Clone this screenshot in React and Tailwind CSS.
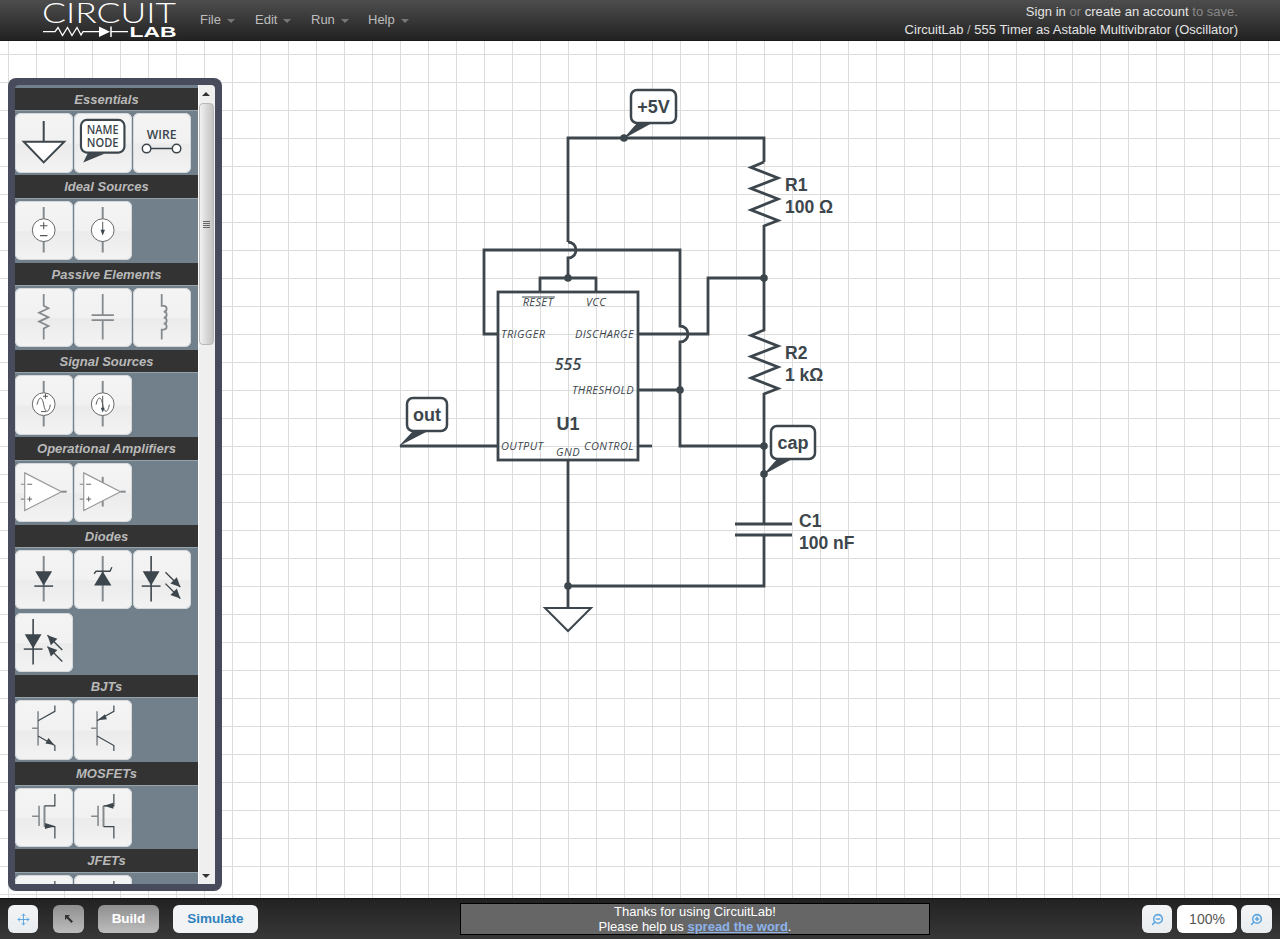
import React from 'react';
import { Move, ZoomIn, ZoomOut } from 'lucide-react';

const INK = '#3c464c';
const GREY = '#858a8e';

// tile glyphs, all in a 58x60 box
const Stem = ({ x = 28.7, y1 = 6, y2 = 52, c = GREY, w = 2 }) => (
  <line x1={x} y1={y1} x2={x} y2={y2} stroke={c} strokeWidth={w} />
);

const Ring = () => <circle cx="28.7" cy="29.5" r="11.5" fill="#fff" stroke="#666" strokeWidth="1" />;

const Sine = () => <path d="M22 30c2-9 5-9 6.700 0s5 9 6.700 0" fill="none" stroke="#555" strokeWidth="1" />;

const OpAmp = ({ rail }) => (
  <g>
    {rail && <line x1="28.7" y1="14" x2="28.7" y2="44" stroke={GREY} strokeWidth="2" />}
    <path d="M9.500 10 46.700 29 9.500 48Z" fill="#fff" stroke="#999" strokeWidth="1.200" />
    <path d="M46.700 29H52" stroke={GREY} strokeWidth="2" />
    <path d="M5.500 21.500H9.500M5.500 36.500H9.500" stroke={GREY} strokeWidth="1.200" />
    <path d="M12 21.500H17M12 36.500H17M14.500 34V39" stroke="#666" strokeWidth="1" />
  </g>
);

const DiodeMark = ({ x = 28.7 }) => (
  <g>
    <path d={`M${x - 8.500} 21.500H${x + 8.500}L${x} 36Z`} fill={INK} />
    <line x1={x - 9.500} y1="36.500" x2={x + 9.500} y2="36.500" stroke={INK} strokeWidth="1.500" />
  </g>
);

const Arrows = ({ inward }) => {
  const one = (y) =>
    inward ? (
      <g key={y}>
        <line x1="32.500" y1={y} x2="47.500" y2={y + 15} stroke={INK} strokeWidth="1.400" />
        <path d={`M32.500 ${y}l10 3.500-6.500 6.500Z`} fill={INK} />
      </g>
    ) : (
      <g key={y}>
        <line x1="32.500" y1={y} x2="47.500" y2={y + 15} stroke={INK} strokeWidth="1.400" />
        <path d={`M47.500 ${y + 15}l-10-3.500 6.500-6.500Z`} fill={INK} />
      </g>
    );
  return <g>{[22.5, 34].map(one)}</g>;
};

const ICONS = {
  ground: (
    <g stroke={INK} fill="none" strokeWidth="2">
      <path d="M28.700 8V29" />
      <path d="M8.500 29H49.500L28.700 50Z" fill="#fff" />
    </g>
  ),
  name: (
    <g>
      <path d="M14 40 9 50 31 41Z" fill={INK} />
      <rect x="6.700" y="7" width="44" height="33" rx="6" fill="#fff" stroke={INK} strokeWidth="2.200" />
      <text x="28.700" y="21.500" textAnchor="middle" fontFamily="Open Sans, sans-serif" fontWeight="600" fontSize="13.500" textLength="32" lengthAdjust="spacingAndGlyphs" fill={INK}>NAME</text>
      <text x="28.700" y="34.300" textAnchor="middle" fontFamily="Open Sans, sans-serif" fontWeight="600" fontSize="13.500" textLength="32" lengthAdjust="spacingAndGlyphs" fill={INK}>NODE</text>
    </g>
  ),
  wire: (
    <g>
      <text x="28.700" y="26.500" textAnchor="middle" fontFamily="Open Sans, sans-serif" fontWeight="600" fontSize="13.500" textLength="30" lengthAdjust="spacingAndGlyphs" fill={INK}>WIRE</text>
      <path d="M17.500 36H39.500" stroke={INK} strokeWidth="1.500" />
      <circle cx="13.400" cy="36" r="4.300" fill="#fff" stroke={INK} strokeWidth="1.500" />
      <circle cx="43.700" cy="36" r="4.300" fill="#fff" stroke={INK} strokeWidth="1.500" />
    </g>
  ),
  voltage: (
    <g>
      <Stem />
      <Ring />
      <path d="M25 25H32.500M28.700 21.500V28.500M25 35H32.500" stroke="#555" strokeWidth="1.100" />
    </g>
  ),
  current: (
    <g>
      <Stem />
      <Ring />
      <path d="M28.700 21V32" stroke="#555" strokeWidth="1" />
      <path d="M26.500 29H31L28.700 35Z" fill={INK} />
    </g>
  ),
  resistor: (
    <path d="M28.700 6V18L33.500 20.500 24 25 33.500 29.500 24 34 33.500 38.500 28.700 41V52" fill="none" stroke={GREY} strokeWidth="1.800" />
  ),
  capacitor: (
    <g stroke={GREY} strokeWidth="1.800">
      <path d="M28.700 6V27.500M28.700 32.500V52" />
      <path d="M17.500 27.500H40M17.500 32.500H40" />
    </g>
  ),
  inductor: (
    <path d="M28.700 6V18h2c4 0 4 6 0 6 4 0 4 6 0 6 4 0 4 6 0 6 4 0 4 6 0 6h-2V52" fill="none" stroke={GREY} strokeWidth="1.800" />
  ),
  acVoltage: (
    <g>
      <Stem />
      <Ring />
      <Sine />
      <path d="M28 21.500H33M30.500 19V24M26 37H31" stroke="#555" strokeWidth="1" />
    </g>
  ),
  acCurrent: (
    <g>
      <Stem />
      <Ring />
      <Sine />
      <path d="M28.700 21V36" stroke="#555" strokeWidth="1" />
      <path d="M26.800 33H30.600L28.700 38Z" fill={INK} />
    </g>
  ),
  opamp: <OpAmp />,
  opampRail: <OpAmp rail />,
  diode: (
    <g>
      <Stem />
      <DiodeMark />
    </g>
  ),
  zener: (
    <g>
      <Stem />
      <path d="M20 36H37.500L28.700 21.500Z" fill={INK} />
      <path d="M20 24 22 21.500H36L38 17.500" fill="none" stroke={INK} strokeWidth="1.400" />
    </g>
  ),
  led: (
    <g>
      <Stem x={18} c={INK} w={1.600} />
      <DiodeMark x={18} />
      <Arrows />
    </g>
  ),
  photo: (
    <g>
      <Stem x={18} c={INK} w={1.600} />
      <DiodeMark x={18} />
      <Arrows inward />
    </g>
  ),
  npn: (
    <g fill="none">
      <path d="M17 28.500H23M23 11.500V46" stroke={GREY} strokeWidth="1.600" />
      <path d="M23 21 40 11.500V5.500M23 36.500 40 46V51.500" stroke={INK} strokeWidth="1.200" />
      <path d="M39.500 45.500 30.500 44 33.500 38.500Z" fill={INK} />
    </g>
  ),
  pnp: (
    <g fill="none">
      <path d="M17 28.500H23M23 11.500V46" stroke={GREY} strokeWidth="1.600" />
      <path d="M23 21 40 11.500V5.500M23 36.500 40 46V51.500" stroke={INK} strokeWidth="1.200" />
      <path d="M23.500 20.500 31 14.500 33 19.500Z" fill={INK} />
    </g>
  ),
  nmos: (
    <g fill="none">
      <path d="M17 28.500H23.500M24 18V38.500" stroke={GREY} strokeWidth="1.600" />
      <path d="M29.500 18V39" stroke={GREY} strokeWidth="2" />
      <path d="M29.500 18H40V6M29.500 39H40V51" stroke={INK} strokeWidth="1.200" />
      <path d="M30 35.500 40 38.500 30 41.500Z" fill={INK} />
    </g>
  ),
  pmos: (
    <g fill="none">
      <path d="M17 28.500H23.500M24 18V38.500" stroke={GREY} strokeWidth="1.600" />
      <path d="M29.500 18V39" stroke={GREY} strokeWidth="2" />
      <path d="M29.500 18H40V6M29.500 39H40V51" stroke={INK} strokeWidth="1.200" />
      <path d="M30 18 39.500 15V21Z" fill={INK} />
    </g>
  ),
};

const SECTIONS = [
  { title: 'Essentials', tiles: ['ground', 'name', 'wire'] },
  { title: 'Ideal Sources', tiles: ['voltage', 'current'] },
  { title: 'Passive Elements', tiles: ['resistor', 'capacitor', 'inductor'] },
  { title: 'Signal Sources', tiles: ['acVoltage', 'acCurrent'] },
  { title: 'Operational Amplifiers', tiles: ['opamp', 'opampRail'] },
  { title: 'Diodes', tiles: ['diode', 'zener', 'led', 'photo'] },
  { title: 'BJTs', tiles: ['npn', 'pnp'] },
  { title: 'MOSFETs', tiles: ['nmos', 'pmos'] },
  { title: 'JFETs', tiles: ['nmos', 'pmos'] },
];

const Tile = ({ name }) => (
  <div className="w-[58px] h-[59.33px] rounded-md shadow-[inset_0_0_0_1px_#d4d8da] bg-[linear-gradient(#f4f4f4_0%,#f1f1f1_50%,#ebebeb_52%,#f3f3f3_100%)]">
    <svg viewBox="0 0 58 60" className="block w-full h-full overflow-visible">
      {ICONS[name]}
    </svg>
  </div>
);

const Section = ({ title, tiles }) => (
  <div>
    <div className="h-[22.33px] bg-[#333333] text-center text-[13px] leading-[23px] italic font-bold text-[#b9b9b9]">
      {title}
    </div>
    <div className="bg-[#71808b] border-t border-[#97a3ab] pt-[2px] pb-[2.67px] flex flex-wrap gap-x-px gap-y-[3.67px]">
      {tiles.map((t) => (
        <Tile key={t} name={t} />
      ))}
    </div>
  </div>
);

const Palette = () => (
  <div className="absolute left-2 top-[37px] w-[214px] h-[813px] rounded-lg bg-[#474b5c] pl-[7px] pr-[7px] pt-[7px] pb-[7px]">
    <div className="flex h-full overflow-hidden rounded-t-sm">
      <div className="w-[183px] overflow-hidden">
        <div className="h-[3px] bg-[#71808b]"></div>
        {SECTIONS.map((s) => (
          <Section key={s.title} title={s.title} tiles={s.tiles} />
        ))}
      </div>
      <div className="w-[17px] relative bg-[#efefef] border-l border-white">
        <div className="absolute top-[7px] left-[3px] border-x-[4px] border-x-transparent border-b-[4px] border-b-[#333]"></div>
        <div className="absolute top-[18px] left-0 w-[15px] h-[242px] rounded-sm border border-[#b8b8b8] bg-[linear-gradient(90deg,#f2f2f2,#d6d6d6_55%,#c4c4c4)] flex flex-col items-center justify-center gap-px">
          <div className="w-[7px] h-px bg-[#666]"></div>
          <div className="w-[7px] h-px bg-[#666]"></div>
          <div className="w-[7px] h-px bg-[#666]"></div>
          <div className="w-[7px] h-px bg-[#666]"></div>
        </div>
        <div className="absolute bottom-[6px] left-[3px] border-x-[4px] border-x-transparent border-t-[4px] border-t-[#333]"></div>
      </div>
    </div>
  </div>
);

const Logo = () => (
  <svg width="136" height="40" viewBox="0 0 136 40" className="block shrink-0 overflow-visible">
    <text x="0" y="23" fontFamily="Lato, sans-serif" fontWeight="300" fontSize="27" fill="#fff" textLength="134" lengthAdjust="spacingAndGlyphs">CIRCUIT</text>
    <path d="M1 31.700H13L16 27.500 20.500 35.500 25.500 27.500 30 35.500 35 27.500 39 35 41 31.700H57M69 31.700H86" fill="none" stroke="#fff" strokeWidth="1.300" />
    <path d="M57 26.500V37L68 31.700Z" fill="#fff" />
    <path d="M69 26.500V37" stroke="#fff" strokeWidth="1.500" />
    <text x="87.500" y="37.300" fontFamily="Liberation Sans, sans-serif" fontWeight="700" fontSize="14.500" fill="#fff" textLength="47" lengthAdjust="spacingAndGlyphs">LAB</text>
  </svg>
);

const Menu = ({ label, className }) => (
  <div className={`flex items-center gap-[6px] text-[13px] text-[#bdbdbd] ${className}`}>
    {label}
    <span className="mt-[3px] border-x-[4px] border-x-transparent border-t-[4px] border-t-[#777]"></span>
  </div>
);

const Header = () => (
  <header className="h-[41px] shrink-0 flex bg-[linear-gradient(#4d4d4d,#222222)] border-b border-[#1a1a1a] pl-[42px] pr-[42px]">
    <Logo />
    <div className="flex ml-[22px] mt-[-1px]">
      <Menu label="File" className="w-[55px]" />
      <Menu label="Edit" className="w-[56px]" />
      <Menu label="Run" className="w-[57px]" />
      <Menu label="Help" />
    </div>
    <div className="ml-auto text-right text-[13px] tracking-[0.03px] leading-[17.500px] pt-[3px] text-[#e4e4e4]">
      <div>
        Sign in <span className="text-[#888]">or</span> create an account <span className="text-[#888]">to save.</span>
      </div>
      <div>CircuitLab <span className="text-[#aaa]">/</span> 555 Timer as Astable Multivibrator (Oscillator)</div>
    </div>
  </header>
);

const WIRES = [
  'M568 242V138H764V162',
  'M764 162L751 167.500 778 178 751 188.500 778 199 751 210 778 220.500 764 226V278',
  'M764 278V330L751 335.500 778 346 751 356.500 778 367 751 378 778 388.500 764 394V524',
  'M568 242a8 8 0 0 1 0 16V278',
  'M540 292V278H596V292',
  'M498 334H484V250H680V326a8 8 0 0 1 0 16V446H764',
  'M638 334H708V278H764',
  'M638 390H680',
  'M638 446H652',
  'M400 446H498',
  'M568 460V608',
  'M764 535V586H568',
];

const DOTS = [
  [624, 138],
  [568, 278],
  [764, 278],
  [680, 390],
  [764, 446],
  [764, 474],
  [568, 586],
];

const Bubble = ({ x, y, w, tail, text }) => (
  <g>
    <path d={tail} fill={INK} />
    <rect x={x} y={y} width={w} height="33" rx="6" fill="#fff" stroke={INK} strokeWidth="2.500" />
    <text x={x + w / 2} y={y + 23} textAnchor="middle" fontFamily="Liberation Sans, sans-serif" fontWeight="700" fontSize="18" fill={INK}>{text}</text>
  </g>
);

const Pin = ({ x, y, anchor = 'start', children }) => (
  <text x={x} y={y} textAnchor={anchor} fontFamily="Open Sans, sans-serif" fontStyle="italic" fontWeight="500" fontSize="11" letterSpacing="0.400" fill={INK}>{children}</text>
);

const Value = ({ x, y, children }) => (
  <text x={x} y={y} fontFamily="Liberation Sans, sans-serif" fontWeight="700" fontSize="17.500" fill={INK}>{children}</text>
);

const Circuit = () => (
  <svg viewBox="0 41 1280 857" className="absolute inset-0 w-full h-full">
    <g fill="none" stroke={INK} strokeWidth="2.800">
      {WIRES.map((d) => (
        <path key={d} d={d} />
      ))}
      <rect x="498" y="292" width="140" height="168" />
      <path d="M735 524H792M735 535H792" />
      <path d="M545 608H591L568 631Z" strokeWidth="2" fill="#fff" />
    </g>
    {DOTS.map(([x, y]) => (
      <circle key={`${x}-${y}`} cx={x} cy={y} r="3.800" fill={INK} />
    ))}
    <Bubble x={631} y={90} w={45} text="+5V" tail="M623 139 638 122 654 122Z" />
    <Bubble x={407} y={398} w={40} text="out" tail="M399 446 414 430 430 430Z" />
    <Bubble x={771} y={426} w={44} text="cap" tail="M763 475 778 458 794 458Z" />
    <Value x={785} y={191}>R1</Value>
    <Value x={785} y={213}>100 Ω</Value>
    <Value x={785} y={359}>R2</Value>
    <Value x={785} y={381}>1 kΩ</Value>
    <Value x={799} y={527}>C1</Value>
    <Value x={799} y={549}>100 nF</Value>
    <Pin x={538} y={306} anchor="middle">RESET</Pin>
    <path d="M522 297H555" stroke={INK} strokeWidth="1" />
    <Pin x={596} y={306} anchor="middle">VCC</Pin>
    <Pin x={501} y={338}>TRIGGER</Pin>
    <Pin x={634} y={338} anchor="end">DISCHARGE</Pin>
    <Pin x={634} y={394} anchor="end">THRESHOLD</Pin>
    <Pin x={501} y={450}>OUTPUT</Pin>
    <Pin x={634} y={450} anchor="end">CONTROL</Pin>
    <Pin x={568} y={456} anchor="middle">GND</Pin>
    <text x="568" y="370" textAnchor="middle" fontFamily="Open Sans, sans-serif" fontStyle="italic" fontWeight="600" fontSize="16" fill={INK}>555</text>
    <text x="568" y="430" textAnchor="middle" fontFamily="Liberation Sans, sans-serif" fontWeight="700" fontSize="18" fill={INK}>U1</text>
  </svg>
);

const IconButton = ({ children, className }) => (
  <div className={`h-[28px] rounded-md flex items-center justify-center ${className}`}>{children}</div>
);

const Footer = () => (
  <footer className="h-[41px] shrink-0 flex items-center bg-[linear-gradient(#222222,#383838)] border-t border-[#111] pl-2 pr-2">
    <IconButton className="w-[30px] bg-[linear-gradient(#f3f4f5,#e9edf0)]">
      <Move size={13} color="#5ea6e0" strokeWidth={1.800} />
    </IconButton>
    <IconButton className="w-[31px] ml-[15px] bg-[linear-gradient(#8f8f8f,#bdbdbd)]">
      <svg width="12" height="12" viewBox="0 0 12 12">
        <path d="M2 2H7L5.300 3.700 10 8.400 8.400 10 3.700 5.300 2 7Z" fill="#333" />
      </svg>
    </IconButton>
    <IconButton className="w-[61px] ml-[14px] pt-px bg-[linear-gradient(#8f8f8f,#bdbdbd)] text-white font-bold text-[13.500px]">
      Build
    </IconButton>
    <IconButton className="w-[85px] ml-[14px] pt-px bg-[#f1f3f5] text-[#2f82bd] font-bold text-[13.500px]">
      Simulate
    </IconButton>
    <div className="w-[470px] h-[32px] ml-[202px] bg-[#666666] border border-black text-center text-white text-[13px] leading-[15px]">
      <div>Thanks for using CircuitLab!</div>
      <div>
        Please help us <span className="font-bold text-[#8db2ea] underline">spread the word</span>.
      </div>
    </div>
    <IconButton className="w-[30px] ml-[212px] bg-[linear-gradient(#f3f4f5,#e9edf0)]">
      <ZoomOut size={13} color="#5ea6e0" strokeWidth={2.800} className="-scale-x-100" />
    </IconButton>
    <IconButton className="w-[60px] ml-[5px] bg-white text-[#555] text-[14px]">100%</IconButton>
    <IconButton className="w-[31px] ml-[4px] bg-[linear-gradient(#f3f4f5,#e9edf0)]">
      <ZoomIn size={13} color="#5ea6e0" strokeWidth={2.800} className="-scale-x-100" />
    </IconButton>
  </footer>
);

export default function App() {
  return (
    <div className="h-screen flex flex-col overflow-hidden font-['Liberation_Sans',Arial,sans-serif]">
      <Header />
      <main className="flex-1 relative overflow-hidden bg-white bg-[linear-gradient(#dcdcdc_1px,transparent_1px),linear-gradient(90deg,#dcdcdc_1px,transparent_1px)] bg-[length:28px_28px] bg-[position:8px_13px]">
        <Circuit />
        <Palette />
      </main>
      <Footer />
    </div>
  );
}
